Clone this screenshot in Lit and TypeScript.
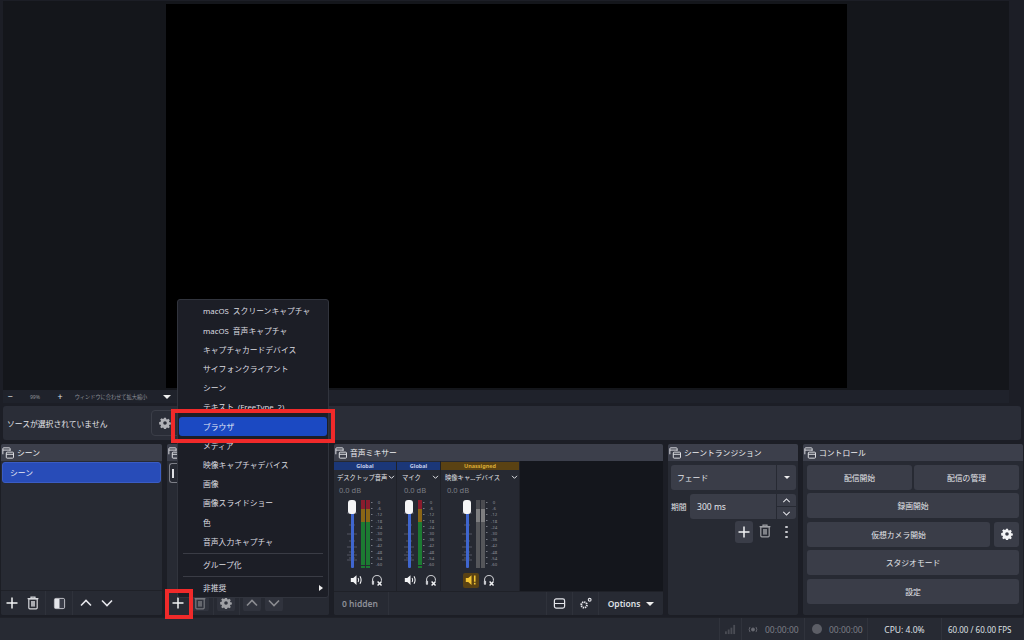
import { LitElement, html, css, svg } from "lit";
import { customElement } from "lit/decorators.js";

const dockIcon = html`<svg class="dockic" viewBox="0 0 14 14" width="12" height="12" fill="none" stroke="#e4e5ea" stroke-width="1.1"><path d="M1 8.500V2a1 1 0 0 1 1-1h6.500a1 1 0 0 1 1 1v2.500"/><path d="M1 3.600h8.500"/><rect x="5" y="6" width="8.400" height="7" rx="1"/><path d="M5 8.500h8.400"/></svg>`;
const plus = html`<svg viewBox="0 0 14 14" width="14" height="14" stroke="#f2f3f5" stroke-width="1.500"><path d="M7 1.500v11M1.500 7h11"/></svg>`;
const trash = (c = "#d6d7dc") => html`<svg viewBox="0 0 14 14" width="14" height="14" fill="none" stroke=${c} stroke-width="1.200"><path d="M1.600 2.600h10.800" stroke-width="1.400"/><path d="M5 2.400V1.200h4v1.200"/><path d="M2.800 2.800h8.400v9a1 1 0 0 1-1 1H3.800a1 1 0 0 1-1-1z"/><rect x="5" y="5" width="4" height="5.600" fill=${c} stroke="none" opacity=".75"/></svg>`;
const up = (c = "#e4e5ea") => html`<svg viewBox="0 0 14 10" width="14" height="10" fill="none" stroke=${c} stroke-width="1.600"><path d="M2 7.500 7 2.500l5 5"/></svg>`;
const down = (c = "#e4e5ea") => html`<svg viewBox="0 0 14 10" width="14" height="10" fill="none" stroke=${c} stroke-width="1.600"><path d="M2 2.500l5 5 5-5"/></svg>`;
const gear = (c = "#e4e5ea", s = 14) => html`<svg viewBox="0 0 14 14" width=${s} height=${s}><path fill=${c} fill-rule="evenodd" d="M5.800.8h2.400l.3 1.700 1 .45 1.450-1 1.700 1.700-1 1.450.45 1 1.700.3v2.400l-1.700.3-.45 1 1 1.450-1.700 1.700-1.450-1-1 .45-.3 1.700H5.800l-.3-1.700-1-.45-1.450 1-1.700-1.700 1-1.450-.45-1-1.700-.3V5.800l1.700-.3.45-1-1-1.450 1.700-1.700 1.450 1 1-.45zM7 4.900a2.100 2.100 0 1 0 0 4.200 2.100 2.100 0 0 0 0-4.200z"/></svg>`;
const speaker = html`<svg viewBox="0 0 16 14" width="13" height="12"><path d="M1 4.500h3L8 1v12L4 9.500H1z" fill="#f2f3f5"/><path d="M10 4.500q1.500 2.500 0 5M12.300 2.500q2.800 4.500 0 9" fill="none" stroke="#f2f3f5" stroke-width="1.300"/></svg>`;
const warnSpeaker = html`<svg viewBox="0 0 16 14" width="13" height="12"><path d="M1 4.500h3L8 1v12L4 9.500H1z" fill="#f1c232"/><path d="M12 1.500v7.500M12 10.500v2" stroke="#f1c232" stroke-width="2"/></svg>`;
const headset = html`<svg viewBox="0 0 14 14" width="12" height="12" fill="none"><path d="M1.800 10V7a5.200 5.200 0 0 1 10.400 0v1" stroke="#c8c9ce" stroke-width="1.300"/><rect x="1" y="8" width="2.600" height="4.500" rx=".8" fill="#c8c9ce"/><path d="M7.700 8.700l4.600 4.600M12.300 8.700l-4.600 4.600" stroke="#f2f3f5" stroke-width="1.700"/></svg>`;
const FT = [13, 25, 34, 41, 47, 52, 55, 58, 60];
const faderTicks = html`<svg class="fticks" viewBox="0 0 10 69" width="10" height="69">${FT.map((y, i) => svg`<path d="M${i % 2 ? 2 : 0} ${y}h${i % 2 ? 6 : 10}" stroke="#60636e" stroke-width=".8"/>`)}</svg>`;

const TICKS = ["0", "-6", "-12", "-18", "-24", "-30", "-36", "-42", "-48", "-54", "-60"];

interface Channel { tag: string; tagClass: string; name: string; width: number; bars: number; off: number; pad: number; iconPad: number; gray?: boolean; warn?: boolean; }
const CHANNELS: Channel[] = [
  { tag: "Global", tagClass: "tg", name: "デスクトップ音声", width: 63, bars: 2, off: 5, pad: 3, iconPad: 16 },
  { tag: "Global", tagClass: "tg", name: "マイク", width: 44, bars: 1, off: -1, pad: 5, iconPad: 7 },
  { tag: "Unassigned", tagClass: "tu", name: "映像キャ…デバイス", width: 79, bars: 2, off: 13, pad: 4, iconPad: 22, gray: true, warn: true },
];

const MENU = ["macOS スクリーンキャプチャ", "macOS 音声キャプチャ", "キャプチャカードデバイス", "サイフォンクライアント", "シーン", "テキスト (FreeType 2)", "ブラウザ", "メディア", "映像キャプチャデバイス", "画像", "画像スライドショー", "色", "音声入力キャプチャ"];

@customElement("app-root")
export class AppRoot extends LitElement {
  static styles = css`
    :host { display: block; width: 1024px; height: 640px; overflow: hidden; position: relative; background: #1c1e26; color: #e4e5ea;
      font-family: "Noto Sans", "Noto Sans CJK JP", sans-serif; font-size: 8px; }
    * { box-sizing: border-box; }
    .page { display: flex; flex-direction: column; height: 640px; }
    .preview { height: 389px; margin: 1px 15px 0 3px; padding-top: 3px; background: #14161b; display: flex; justify-content: center; flex: none; }
    .canvas { width: 681px; height: 384px; background: #000; margin-left: 1px; }
    .zoom { height: 13px; margin: 0 15px 0 3px; display: flex; align-items: center; font-size: 5.200px; color: #8d8f97; flex: none; background: #1f222b; }
    .zoom span { display: flex; align-items: center; justify-content: center; height: 13px; white-space: nowrap; }
    .zoom .sym { color: #dfe0e4; font-size: 9px; }
    .zoom .caret { width: 0; height: 0; border: 4px solid transparent; border-top: 4px solid #eee; border-bottom: 0; margin-left: 8px; }
    .ctx { height: 34px; margin: 3px 3px 0 3px; border-radius: 3px; display: flex; align-items: center; padding-left: 4px; font-size: 7.800px; color: #e4e5ea; flex: none; background: #2a2d37; }
    .ctxbtn { width: 30px; height: 26px; margin-left: 43px; border: 1px solid #3b3e48; border-radius: 4px; display: flex; align-items: center; padding-left: 7px; }
    .docks { display: flex; height: 173px; margin-top: 3px; gap: 3px; flex: none; }
    .dock { display: flex; flex-direction: column; background: #272a33; border: 1px solid #1c1e25; border-radius: 3px; height: 173px; flex: none; overflow: hidden; }
    .dhead { height: 17px; flex: none; background: #3c3f4b; display: flex; align-items: center; gap: 3px; font-size: 7.800px; color: #f0f0f3; padding-left: 1px; white-space: nowrap; }
    .scenes { width: 163px; }
    .sources { width: 164px; }
    .list { flex: 1; padding: 1px; }
    .sel { height: 21px; border-radius: 3px; background: #284cb8; border: 1px solid #3a5cc4; padding-left: 7px; display: flex; align-items: center; font-size: 7.800px; color: #e8eaf4; }
    .tools { height: 25px; flex: none; border-top: 1px solid #1f2128; display: flex; align-items: center; background: #272a33; }
    .tb { width: 21px; height: 18px; display: flex; align-items: center; justify-content: center; flex: none; }
    .sep { width: 1px; height: 24px; background: #2f323b; margin: 0 2.400px; flex: none; }
    .tools.dim .tb { width: 22px; height: 16px; padding: 0 2px; background: #30333d content-box; border-radius: 3px; }
    .tools.dim .tb.first { background: none; }
    .tools.dim .sep { margin: 0 1.500px; }
    .srclist { flex: 1; padding: 2px 0 0 2px; }
    .srcbox { width: 11px; height: 20px; border: 1px solid #7d7f87; border-radius: 3px 0 0 3px; border-right: 0; padding: 5px 0 0 1.500px; }
    .srcbox i { display: block; width: 2.500px; height: 9px; background: #dfe0e4; }
    .mixer { width: 331px; }
    .strips { flex: 1; display: flex; min-height: 0; background: #14161c; }
    .strip { display: flex; flex-direction: column; background: #262932; border-right: 1px solid #1f2128; flex: none; height: 100%; padding-top: 1px; }
    .tag { height: 8px; font-size: 5.500px; line-height: 8px; text-align: center; font-weight: 700; flex: none; }
    .tg { background: #1b3778; color: #c3cdea; }
    .tu { background: #5a4213; color: #d9ac36; }
    .cname { height: 14px; display: flex; align-items: center; justify-content: space-between; font-size: 6.300px; padding-right: 1px; color: #e4e5ea; white-space: nowrap; flex: none; }
    .cname svg { flex: none; }
    .db { height: 13px; font-size: 7.500px; color: #7c7e86; line-height: 13px; flex: none; }
    .meter { height: 69px; display: flex; margin-top: 3px; flex: none; }
    .fader { width: 22px; position: relative; flex: none; }
    .fticks { position: absolute; left: 8px; top: 0; }
    .track { position: absolute; left: 11.500px; top: 5px; width: 3px; height: 63px; background: #3f66cf; border-radius: 1px; }
    .knob { position: absolute; left: 9px; top: 0; width: 8px; height: 14px; background: #f5f5f6; border-radius: 3px; }
    .bars { display: flex; gap: 1px; height: 68px; flex: none; }
    .bar { width: 4px; height: 68px; background: linear-gradient(to bottom, #8a1c2d 0 13%, #8a6516 13% 32%, #1c7a32 32% 95.500%, #272a33 95.500% 97%, #1c7a32 97%); }
    .bar.gray { background: linear-gradient(to bottom, #4a4b50 0 13%, #7e7e80 13% 32%, #55565a 32%); }
    .scale { display: flex; flex-direction: column; justify-content: space-between; height: 66px; margin-left: 1px; font-size: 4.300px; line-height: 4px; color: #8f9199; width: 12px; flex: none; }
    .scale span { text-align: center; padding-left: 4px; background: linear-gradient(#777a84, #777a84) left center / 1.500px 1px no-repeat; white-space: nowrap; }
    .cicons { flex: 1; display: flex; align-items: center; }
    .cicons svg { flex: none; }
    .cicons .hs { margin-left: 8px; display: flex; }
    .wb { width: 16px; height: 15px; background: #5a4213; border-radius: 2px; display: flex; align-items: center; justify-content: center; flex: none; }
    .wb + .hs { margin-left: 4px; }
    .mtools { height: 24px; flex: none; display: flex; align-items: center; border-top: 1px solid #1f2128; background: #272a33; font-size: 8.500px; color: #8d8f97; font-weight: 600; }
    .hid { width: 55px; padding-left: 8px; height: 100%; display: flex; align-items: center; border-right: 1px solid #2f323b; flex: none; }
    .grow { flex: 1; }
    .mb { height: 100%; display: flex; align-items: center; justify-content: center; border-left: 1px solid #2f323b; flex: none; width: 26px; }
    .opt { width: 65px; color: #dfe0e4; gap: 6px; }
    .opt i { width: 0; height: 0; border: 4px solid transparent; border-top: 4.500px solid #eee; border-bottom: 0; display: block; }
    .trans { width: 132px; }
    .tbody { flex: 1; padding: 4px 2px 4px 3px; display: flex; flex-direction: column; gap: 4px; }
    .combo { height: 25px; background: #3a3d48; border-radius: 3px; display: flex; align-items: center; font-size: 7.800px; padding-left: 6px; flex: none; }
    .combo .arrow { margin-left: auto; width: 20px; height: 100%; border-left: 1px solid #272a33; display: flex; align-items: center; justify-content: center; }
    .combo .arrow i { width: 0; height: 0; border: 3.500px solid transparent; border-top: 3.500px solid #eee; border-bottom: 0; display: block; }
    .period { display: flex; align-items: center; gap: 3.500px; height: 25px; font-size: 7.800px; flex: none; }
    .spin { flex: 1; height: 25px; background: #3a3d48; border-radius: 3px; display: flex; align-items: center; padding-left: 7px; font-size: 8.500px; }
    .spinb { margin-left: auto; width: 20px; height: 100%; display: flex; flex-direction: column; border-left: 1px solid #272a33; }
    .spinb span { flex: 1; display: flex; align-items: center; justify-content: center; }
    .spinb span + span { border-top: 1px solid #272a33; }
    .spinb svg { width: 9px; height: 7px; }
    .trow { display: flex; justify-content: flex-end; align-items: center; height: 22px; flex: none; margin-top: -2px; padding-right: 2px; }
    .trow .plusb { width: 18px; height: 22px; background: #3a3d48; border-radius: 3px; display: flex; align-items: center; justify-content: center; margin-right: 5px; }
    .tdots { width: 15px; margin-left: 7px; display: flex; flex-direction: column; gap: 2.500px; align-items: center; }
    .tdots i { width: 2.500px; height: 2.500px; background: #c8c9ce; border-radius: 50%; display: block; }
    .control { width: 222px; flex: none; }
    .cbody { flex: 1; padding: 4px; display: flex; flex-direction: column; gap: 3.400px; }
    .crow { display: flex; gap: 2px; height: 25px; flex: none; }
    .crow.g4 { gap: 4px; }
    .btn { flex: 1; background: #3a3d48; border-radius: 3px; display: flex; align-items: center; justify-content: center; font-size: 7.800px; color: #e4e5ea; }
    .btn.sq { flex: none; width: 25px; }
    .status { height: 23px; flex: none; margin-top: 1px; display: flex; justify-content: flex-end; align-items: center; border-top: 1px solid #1f2128; font-size: 8.500px; color: #dfe0e4; background: #272a33; }
    .st { height: 100%; display: flex; align-items: center; border-left: 1px solid #30333c; flex: none; white-space: nowrap; }
    .st.dim { color: #7c7e86; }
    .s1 { width: 22px; justify-content: center; }
    .s2 { width: 63px; padding-left: 5px; gap: 6px; }
    .s3 { width: 63px; padding-left: 7px; gap: 7px; }
    .s4 { width: 74px; justify-content: center; }
    .s5 { width: 83px; padding-left: 6px; font-size: 8px; }
    .dot { width: 10px; height: 10px; border-radius: 50%; background: #5c5e66; flex: none; }
    .menu { position: absolute; left: 177px; top: 299px; width: 152px; height: 299px; background: #1c1e26; border: 1px solid #31343d; border-radius: 3px; font-size: 7.800px; word-spacing: 2px; color: #dcdde1; padding-top: 1.400px; }
    .mi { height: 19.200px; margin: 0 1px; padding-left: 24px; display: flex; align-items: center; white-space: nowrap; border-radius: 3px; }
    .mi.hl { background: #1b49c2; color: #e6e9f5; }
    .msep { height: 1px; background: #3a3c45; margin: 2px 5px 1px; }
    .arrowr { margin-left: auto; margin-right: 4px; width: 0; height: 0; border: 3.500px solid transparent; border-left: 4px solid #eee; border-right: 0; }
    .red { position: absolute; border: 4px solid #f02a2a; pointer-events: none; }
    .r1 { left: 171px; top: 409px; width: 164px; height: 34px; }
    .r2 { left: 165px; top: 589px; width: 28px; height: 30px; }
  `;

  private strip(c: Channel) {
    return html`<div class="strip" style="width:${c.width}px">
      <div class="tag ${c.tagClass}">${c.tag}</div>
      <div class="cname" style="padding-left:${c.pad}px"><span>${c.name}</span><svg viewBox="0 0 8 6" width="7" height="5" fill="none" stroke="#dfe0e4" stroke-width="1.200"><path d="M1 1l3 3 3-3"/></svg></div>
      <div class="db" style="padding-left:${c.pad + 2}px">0.0 dB</div>
      <div class="meter" style="margin-left:${c.off}px">
        <div class="fader">${faderTicks}<div class="track"></div><div class="knob"></div></div>
        <div class="bars">${Array.from({ length: c.bars }, () => html`<div class="bar ${c.gray ? "gray" : ""}"></div>`)}</div>
        <div class="scale">${TICKS.map((t) => html`<span>${t}</span>`)}</div>
      </div>
      <div class="cicons" style="padding-left:${c.iconPad}px">${c.warn ? html`<span class="wb">${warnSpeaker}</span>` : speaker}<span class="hs">${headset}</span></div>
    </div>`;
  }

  render() {
    return html`<div class="page">
      <div class="preview"><div class="canvas"></div></div>
      <div class="zoom">
        <span class="sym" style="width:14px">−</span><span style="width:36px">99%</span><span class="sym" style="width:14px">+</span>
        <span style="width:88px">ウィンドウに合わせて拡大縮小</span><span class="caret"></span>
      </div>
      <div class="ctx">ソースが選択されていません<div class="ctxbtn">${gear("#b0b1b6", 12)}</div></div>
      <div class="docks">
        <div class="dock scenes">
          <div class="dhead">${dockIcon}シーン</div>
          <div class="list"><div class="sel">シーン</div></div>
          <div class="tools"><span class="tb">${plus}</span><span class="tb">${trash()}</span><span class="sep"></span><span class="tb"><svg viewBox="0 0 14 14" width="13" height="13"><rect x="1.500" y="1.500" width="11" height="11" rx="1.500" fill="#3a3d48" stroke="#c8c9ce"/><rect x="2" y="2" width="5" height="10" fill="#e4e5ea"/></svg></span><span class="sep"></span><span class="tb">${up()}</span><span class="tb">${down()}</span></div>
        </div>
        <div class="dock sources">
          <div class="dhead">${dockIcon}ソース</div>
          <div class="srclist"><div class="srcbox"><i></i></div></div>
          <div class="tools dim"><span class="tb first">${plus}</span><span class="tb">${trash("#77797f")}</span><span class="sep"></span><span class="tb">${gear("#9fa0a5", 12)}</span><span class="sep"></span><span class="tb">${up("#8a8b90")}</span><span class="tb">${down("#8a8b90")}</span></div>
        </div>
        <div class="dock mixer">
          <div class="dhead">${dockIcon}音声ミキサー</div>
          <div class="strips">${CHANNELS.map((c) => this.strip(c))}</div>
          <div class="mtools"><div class="hid">0 hidden</div><div class="grow"></div>
            <div class="mb"><svg viewBox="0 0 14 14" width="13" height="13" fill="none" stroke="#e4e5ea" stroke-width="1.300"><rect x="1.500" y="2" width="11" height="10" rx="2"/><path d="M1.500 7h11"/></svg></div>
            <div class="mb"><svg viewBox="0 0 14 14" width="13" height="13" fill="none" stroke="#e4e5ea"><circle cx="5.500" cy="8.500" r="3" stroke-width="2" stroke-dasharray="1.500 .8"/><circle cx="11.500" cy="3" r="1.500" stroke-width="1.200"/></svg></div>
            <div class="mb opt">Options<i></i></div></div>
        </div>
        <div class="dock trans">
          <div class="dhead">${dockIcon}シーントランジション</div>
          <div class="tbody">
            <div class="combo">フェード<div class="arrow"><i></i></div></div>
            <div class="period">期間<div class="spin">300 ms<div class="spinb"><span>${up()}</span><span>${down()}</span></div></div></div>
            <div class="trow"><span class="plusb">${plus}</span><span>${trash("#9fa0a5")}</span><span class="tdots"><i></i><i></i><i></i></span></div>
          </div>
        </div>
        <div class="dock control">
          <div class="dhead">${dockIcon}コントロール</div>
          <div class="cbody">
            <div class="crow"><div class="btn">配信開始</div><div class="btn">配信の管理</div></div>
            <div class="crow"><div class="btn">録画開始</div></div>
            <div class="crow g4"><div class="btn">仮想カメラ開始</div><div class="btn sq">${gear("#f2f3f5", 12)}</div></div>
            <div class="crow"><div class="btn">スタジオモード</div></div>
            <div class="crow"><div class="btn">設定</div></div>
          </div>
        </div>
      </div>
      <div class="status">
        <div class="st s1"><svg viewBox="0 0 14 12" width="13" height="11" fill="#4a4c54"><rect x="1" y="8" width="2" height="3"/><rect x="4" y="6" width="2" height="5"/><rect x="7" y="4" width="2" height="7"/><rect x="10" y="1" width="2" height="10"/></svg></div>
        <div class="st dim s2"><svg viewBox="0 0 14 10" width="12" height="9" fill="none" stroke="#6a6c74"><circle cx="7" cy="5" r="1.800" fill="#6a6c74"/><path d="M3.500 2q-2 3 0 6M10.500 2q2 3 0 6"/></svg><span>00:00:00</span></div>
        <div class="st dim s3"><span class="dot"></span><span>00:00:00</span></div>
        <div class="st s4">CPU: 4.0%</div>
        <div class="st s5">60.00 / 60.00 FPS</div>
      </div>
      <div class="menu">
        ${MENU.map((m, i) => html`<div class="mi ${i === 6 ? "hl" : ""}">${m}</div>`)}
        <div class="msep"></div>
        <div class="mi">グループ化</div>
        <div class="msep"></div>
        <div class="mi">非推奨<span class="arrowr"></span></div>
      </div>
      <div class="red r1"></div>
      <div class="red r2"></div>
    </div>`;
  }
}
